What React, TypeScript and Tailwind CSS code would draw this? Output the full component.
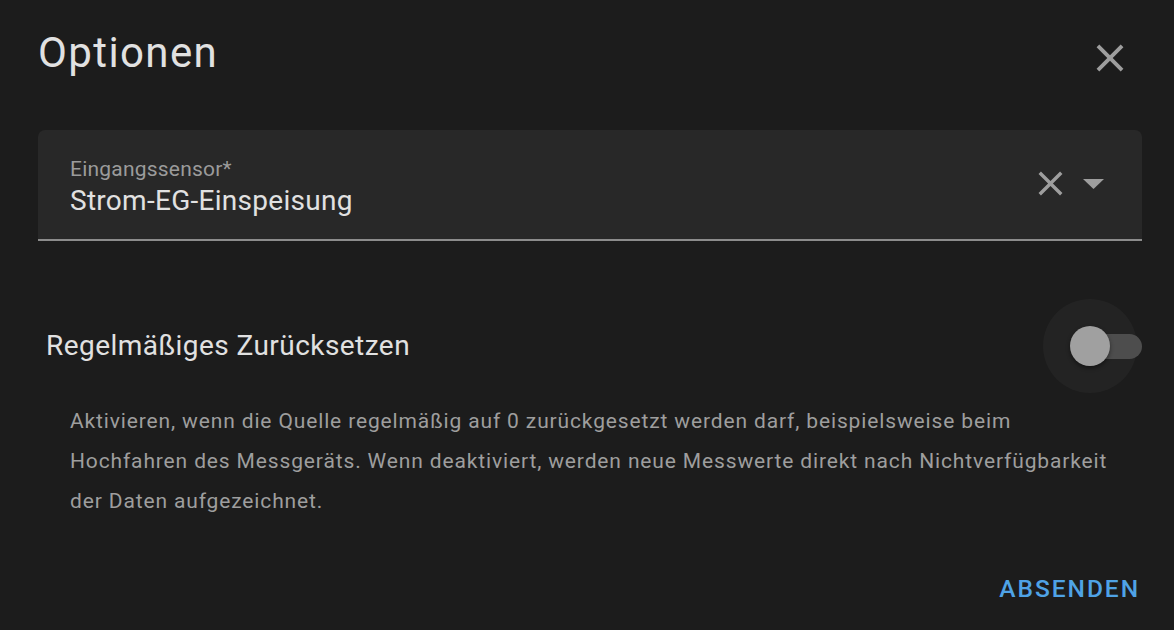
import React from "react";

const closePath =
  "M19,6.41L17.59,5L12,10.59L6.41,5L5,6.41L10.59,12L5,17.59L6.41,19L12,13.41L17.59,19L19,17.59L13.41,12L19,6.41Z";

function CloseIcon({ size, color }: { size: number; color: string }) {
  return (
    <svg width={size} height={size} viewBox="0 0 24 24" fill={color}>
      <path d={closePath} />
    </svg>
  );
}

export default function App() {
  return (
    <div
      className="w-full h-[630px] bg-[#1c1c1c] overflow-hidden pl-[38px] pr-[32px]"
      style={{ fontFamily: "Roboto, 'Noto Sans', sans-serif" }}
    >
      {/* header */}
      <div className="flex items-start justify-between pt-[28px] h-[77px]">
        <h2 className="text-[42px] leading-[49px] font-normal tracking-[0.033em] text-[#e1e1e1]">
          Optionen
        </h2>
        <button className="mt-[7px] mr-[9px]">
          <CloseIcon size={46} color="#9e9e9e" />
        </button>
      </div>

      {/* select field */}
      <div className="mt-[53px] h-[111px] rounded-t-[7px] bg-[#282828] border-b-2 border-[#8c8c8c] flex items-center pl-[32px] pr-[38px]">
        <div className="flex-1 self-start pt-[27px]">
          <div className="text-[21px] leading-[25px] tracking-[0.01em] text-[#9b9b9b]">
            Eingangssensor*
          </div>
          <div className="mt-[2px] text-[28px] leading-[33px] tracking-[0.01em] text-[#e1e1e1]">
            Strom-EG-Einspeisung
          </div>
        </div>
        <div className="flex items-center gap-[12px] -mt-[2px]">
          <CloseIcon size={41} color="#9e9e9e" />
          <svg width="21" height="10" viewBox="0 0 21 10">
            <path d="M0,0 L21,0 L10.5,10 Z" fill="#9e9e9e" />
          </svg>
        </div>
      </div>

      {/* reset row */}
      <div className="mt-[85px] flex items-center justify-between pl-[8px]">
        <span className="text-[28px] leading-[34px] tracking-[0.016em] text-[#e1e1e1]">
          Regelmäßiges Zurücksetzen
        </span>
        <div className="relative w-[72px] h-[40px]">
          <div className="absolute left-[-27px] top-[-27px] w-[94px] h-[94px] rounded-full bg-[#ffffff]/[0.03]" />
          <div className="absolute right-0 top-[7.5px] w-[63px] h-[25px] rounded-full bg-[#4d4d4d]" />
          <div className="absolute left-0 top-0 w-[40px] h-[40px] rounded-full bg-[#a0a0a0] shadow-[0_2px_4px_rgba(0,0,0,0.45)]" />
        </div>
      </div>

      {/* description */}
      <p className="mt-[35px] pl-[32px] text-[21px] leading-[40px] tracking-[0.041em] text-[#9e9e9e]">
        Aktivieren, wenn die Quelle regelmäßig auf 0 zurückgesetzt werden darf, beispielsweise beim
        <br />
        Hochfahren des Messgeräts. Wenn deaktiviert, werden neue Messwerte direkt nach Nichtverfügbarkeit
        <br />
        der Daten aufgezeichnet.
      </p>

      {/* actions */}
      <div className="mt-[53px] flex justify-end pr-[2px]">
        <button className="text-[24.5px] leading-[30px] font-medium tracking-[0.08em] text-[#4fa3e6]">
          ABSENDEN
        </button>
      </div>
    </div>
  );
}
